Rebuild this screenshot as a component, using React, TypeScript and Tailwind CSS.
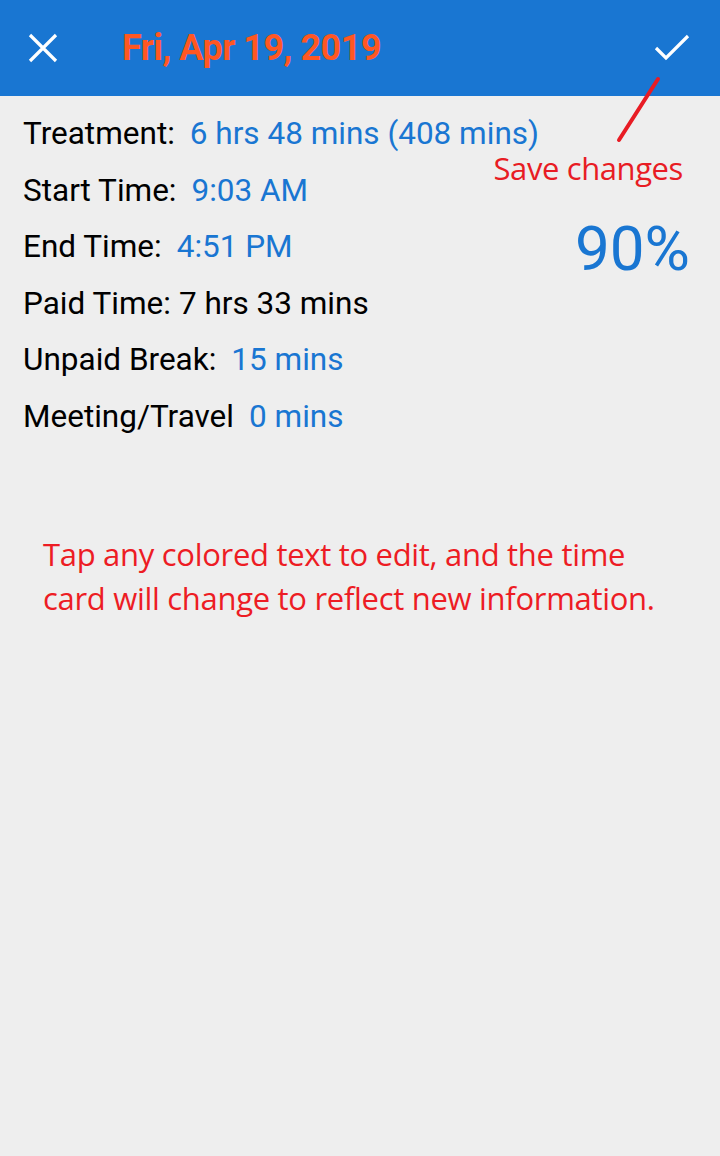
import React from "react";

const rows: { label: string; value: string; blue: boolean }[] = [
  { label: "Treatment:", value: "6 hrs 48 mins (408 mins)", blue: true },
  { label: "Start Time:", value: "9:03 AM", blue: true },
  { label: "End Time:", value: "4:51 PM", blue: true },
  { label: "Paid Time:", value: "7 hrs 33 mins", blue: false },
  { label: "Unpaid Break:", value: "15 mins", blue: true },
  { label: "Meeting/Travel", value: "0 mins", blue: true },
];

export default function App() {
  return (
    <div className="relative w-[720px] h-[1156px] bg-[#eeeeee] overflow-hidden font-['Roboto',sans-serif]">
      <header className="h-[96px] bg-[#1976d2] flex items-center px-[28px]">
        <svg width="30" height="30" viewBox="0 0 30 30" className="shrink-0">
          <path d="M2 2 L28 28 M28 2 L2 28" stroke="#fff" strokeWidth="3.2" fill="none" />
        </svg>
        <h1 className="ml-[64px] text-[36px] font-bold tracking-[-0.5px] text-[#ff5722]">
          Fri, Apr 19, 2019
        </h1>
        <svg width="36" height="30" viewBox="0 0 36 30" className="ml-auto mr-[2px] shrink-0">
          <path d="M2 15 L12 25 L34 3" stroke="#fff" strokeWidth="3.2" fill="none" />
        </svg>
      </header>

      <div className="flex">
        <div className="flex-1 min-w-0 pl-[23px] pt-[20px] flex flex-col gap-[21.6px]">
          {rows.map((r) => (
            <div key={r.label} className="text-[31.5px] leading-[35px] text-black whitespace-nowrap">
              {r.label}
              {r.blue ? (
                <span className="ml-[15px] text-[#1976d2]">{r.value}</span>
              ) : (
                <span className="ml-[8px]">{r.value}</span>
              )}
            </div>
          ))}
        </div>

        {/* right column: annotation + score */}
        <div className="shrink-0 flex flex-col items-end pt-[52px] pr-[30px]">
          <div className="mr-[7px] text-[31px] leading-[40px] text-[#e81c24] font-['Open_Sans',sans-serif] tracking-[-0.4px] whitespace-nowrap">
            Save changes
          </div>
          <div className="mt-[25px] text-[62px] leading-[72px] text-[#1976d2]">90%</div>
        </div>
      </div>

      <p className="mt-[98px] ml-[43px] w-[632px] text-[31px] leading-[44px] text-[#ed1c24] font-['Open_Sans',sans-serif] tracking-[-0.3px]">
        Tap any colored text to edit, and the time card will change to reflect new information.
      </p>

      {/* pointer line from the annotation up to the save button */}
      <svg className="absolute left-0 top-0 pointer-events-none" width="720" height="200">
        <line x1="658" y1="79" x2="619" y2="140" stroke="#e81c24" strokeWidth="4" strokeLinecap="round" />
      </svg>
    </div>
  );
}
